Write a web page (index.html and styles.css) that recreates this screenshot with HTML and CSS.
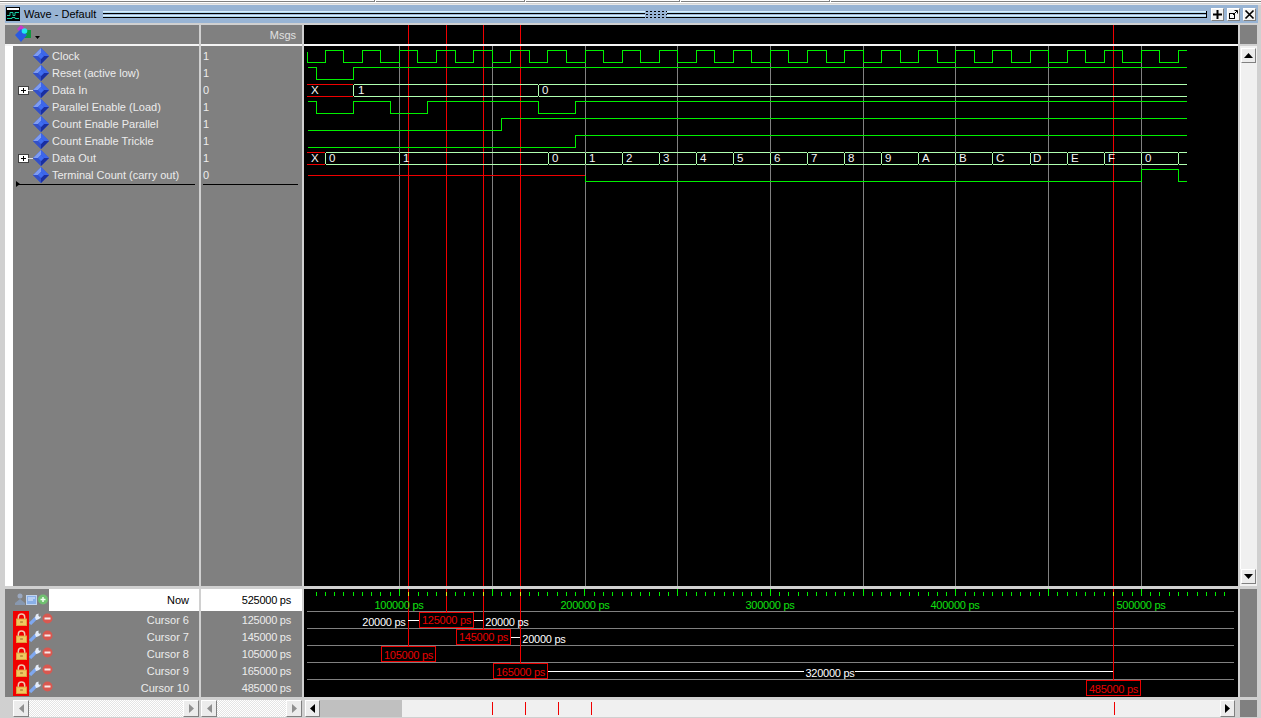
FILE: index.html
```html
<!DOCTYPE html>
<html lang="en">
<head>
<meta charset="utf-8">
<title>Wave - Default</title>
<link rel="stylesheet" href="styles.css">
</head>
<body>
<svg class="defs" width="0" height="0" aria-hidden="true">
  <defs>
    <symbol id="diamond" viewBox="0 0 16 16">
      <path d="M8 0L16 8L8 16L0 8Z" fill="#2a4fd8"/>
      <path d="M8 0L8 5L5 8L0 8Z" fill="#7f9cf0"/>
      <path d="M8 0L16 8L11 8L8 5Z" fill="#3c66ea"/>
      <path d="M0 8L5 8L8 11L8 16Z" fill="#3350c8"/>
      <path d="M16 8L11 8L8 11L8 16Z" fill="#1a2fa0"/>
      <path d="M8 5L11 8L8 11L5 8Z" fill="#3f6cf0"/>
    </symbol>
    <symbol id="lock" viewBox="0 0 12 14">
      <path d="M2.500 7V4.500a3.500 3.500 0 0 1 7 0V7" fill="none" stroke="#f0c8b0" stroke-width="1.600"/>
      <rect x="0.500" y="6.500" width="11" height="7" fill="#f0c860" stroke="#e0a840"/>
      <rect x="4.500" y="9" width="3" height="1.500" fill="#b08030"/>
    </symbol>
    <symbol id="wrench" viewBox="0 0 12 12">
      <path d="M1 11L7 5" stroke="#7fa8f0" stroke-width="3.200" fill="none"/>
      <path d="M6 4.500L7 1.500L9.500 0.500V3L11 4L12 2.500L11.500 5L9 6.500L7 7Z" fill="#e4ecfa"/>
    </symbol>
    <symbol id="minus" viewBox="0 0 11 11">
      <circle cx="5.500" cy="5.500" r="5" fill="#d85850"/>
      <rect x="2.500" y="4.500" width="6" height="2" fill="#f8e8e8"/>
    </symbol>
  </defs>
</svg>
<div class="window">
  <div class="strip"><i class="tab t1"></i><i class="tab t2"></i><i class="tab t3"></i><i class="tab t4"></i><i class="tab t5"></i></div>
  <header class="titlebar">
    <svg class="title-icon" width="14" height="14" viewBox="0 0 14 14">
      <rect width="14" height="14" fill="#000"/>
      <rect x="1" y="1" width="12" height="2" fill="#fff"/>
      <path d="M1 8.500h3v-3h3v3h2v-3h4M1 11.500h5v-1h3v1h4" stroke="#18c8a0" fill="none"/>
    </svg>
    <span class="title-text">Wave - Default</span>
    <div class="grip"><div class="dots"></div></div>
    <div class="title-buttons">
      <button class="tbtn"><svg width="11" height="11" viewBox="0 0 11 11"><path d="M5.500 1v9M1 5.500h9" stroke="#000" stroke-width="2"/></svg></button>
      <button class="tbtn"><svg width="11" height="11" viewBox="0 0 11 11"><rect x="1.500" y="4.500" width="5" height="5" fill="none" stroke="#000"/><path d="M5 6l4-4M6.500 1.500h3v3" stroke="#000" fill="none"/></svg></button>
      <button class="tbtn"><svg width="11" height="11" viewBox="0 0 11 11"><path d="M1.500 1.500l8 8M9.500 1.500l-8 8" stroke="#000" stroke-width="1.700"/></svg></button>
    </div>
  </header>

  <main class="panes">
    <!-- header row -->
    <div class="head head-names">
      <svg width="17" height="17" viewBox="0 0 17 17">
        <path d="M6 0L11 4L6 8L2 4Z" fill="#c838c8"/>
        <rect x="8" y="5" width="8" height="8" fill="#109840"/>
        <path d="M6 4L12 10L6 17L0 10Z" fill="#2a5ae0"/>
        <circle cx="9.500" cy="6" r="2.800" fill="#20e8f0"/>
      </svg>
      <svg class="caret" width="5" height="3" viewBox="0 0 5 3"><path d="M0 0h5L2.500 3Z" fill="#000"/></svg>
    </div>
    <div class="head head-values">Msgs</div>
    <div class="head head-wave">
      <svg class="head-svg" viewBox="304 25 934 19" width="934" height="19">
        <path class="cur" d="M408.500 25V44M446.500 25V44M483.500 25V44M520.500 25V44M1113.500 25V44"/>
      </svg>
    </div>
    <div class="vscroll-head"></div>

    <!-- signals -->
    <div class="names">
      <div class="sig"><svg class="dia"><use href="#diamond"/></svg><span>Clock</span></div>
      <div class="sig"><svg class="dia"><use href="#diamond"/></svg><span>Reset (active low)</span></div>
      <div class="sig"><i class="plus"></i><svg class="dia"><use href="#diamond"/></svg><span>Data In</span></div>
      <div class="sig"><svg class="dia"><use href="#diamond"/></svg><span>Parallel Enable (Load)</span></div>
      <div class="sig"><svg class="dia"><use href="#diamond"/></svg><span>Count Enable Parallel</span></div>
      <div class="sig"><svg class="dia"><use href="#diamond"/></svg><span>Count Enable Trickle</span></div>
      <div class="sig"><i class="plus"></i><svg class="dia"><use href="#diamond"/></svg><span>Data Out</span></div>
      <div class="sig"><svg class="dia"><use href="#diamond"/></svg><span>Terminal Count (carry out)</span></div>
      <div class="endline"></div>
    </div>
    <div class="values">
      <div class="val">1</div><div class="val">1</div><div class="val">0</div><div class="val">1</div>
      <div class="val">1</div><div class="val">1</div><div class="val">1</div><div class="val">0</div>
      <div class="endline"></div>
    </div>
    <svg class="wave" viewBox="304 46 934 540" width="934" height="540">
      <path class="grid" d="M399.500 46V586M492.500 46V586M585.500 46V586M677.500 46V586M770.500 46V586M863.500 46V586M955.500 46V586M1048.500 46V586M1141.500 46V586"/>
      <path class="cur" d="M408.500 46V586M446.500 46V586M483.500 46V586M520.500 46V586M1113.500 46V586"/>
      <path class="sigline" d="M307.500 52V62.500H325.500V50.500H343.500V62.500H362.500V50.500H380.500V62.500H399.500V50.500H417.500V62.500H436.500V50.500H455.500V62.500H473.500V50.500H492.500V62.500H510.500V50.500H529.500V62.500H547.500V50.500H566.500V62.500H585.500V50.500H603.500V62.500H622.500V50.500H640.500V62.500H659.500V50.500H677.500V62.500H696.500V50.500H714.500V62.500H733.500V50.500H751.500V62.500H770.500V50.500H788.500V62.500H807.500V50.500H826.500V62.500H844.500V50.500H863.500V62.500H881.500V50.500H900.500V62.500H918.500V50.500H937.500V62.500H955.500V50.500H974.500V62.500H992.500V50.500H1011.500V62.500H1030.500V50.500H1048.500V62.500H1067.500V50.500H1085.500V62.500H1104.500V50.500H1122.500V62.500H1141.500V50.500H1159.500V62.500H1178.500V50.500H1187"/>
      <path class="sigline" d="M308 67.500H316.500V79.500H353.500V67.500H1187"/>
      <path class="redline" d="M307 84.500H353M307 96.500H353"/>
      <path class="bus" d="M353.500 85.500L354.500 84.500H537.500L538.500 85.500V95.500L537.500 96.500H354.500L353.500 95.500ZM538.500 85.500L539.500 84.500H1187M538.500 95.500L539.500 96.500H1187"/>
      <path class="sigline" d="M308 101.500H316.500V113.500H353.500V101.500H390.500V113.500H427.500V101.500H538.500V113.500H575.500V101.500H1187"/>
      <path class="sigline" d="M308 130.500H501.500V118.500H1187"/>
      <path class="sigline" d="M308 147.500H575.500V135.500H1187"/>
      <path class="redline" d="M307 152.500H325M307 164.500H325"/>
      <path class="bus" d="M325.500 153.500L326.500 152.500H398.500L399.500 153.500V163.500L398.500 164.500H326.500L325.500 163.500ZM399.500 153.500L400.500 152.500H547.500L548.500 153.500V163.500L547.500 164.500H400.500L399.500 163.500ZM548.500 153.500L549.500 152.500H584.500L585.500 153.500V163.500L584.500 164.500H549.500L548.500 163.500ZM585.500 153.500L586.500 152.500H621.500L622.500 153.500V163.500L621.500 164.500H586.500L585.500 163.500ZM622.500 153.500L623.500 152.500H658.500L659.500 153.500V163.500L658.500 164.500H623.500L622.500 163.500ZM659.500 153.500L660.500 152.500H695.500L696.500 153.500V163.500L695.500 164.500H660.500L659.500 163.500ZM696.500 153.500L697.500 152.500H732.500L733.500 153.500V163.500L732.500 164.500H697.500L696.500 163.500ZM733.500 153.500L734.500 152.500H769.500L770.500 153.500V163.500L769.500 164.500H734.500L733.500 163.500ZM770.500 153.500L771.500 152.500H806.500L807.500 153.500V163.500L806.500 164.500H771.500L770.500 163.500ZM807.500 153.500L808.500 152.500H843.500L844.500 153.500V163.500L843.500 164.500H808.500L807.500 163.500ZM844.500 153.500L845.500 152.500H880.500L881.500 153.500V163.500L880.500 164.500H845.500L844.500 163.500ZM881.500 153.500L882.500 152.500H917.500L918.500 153.500V163.500L917.500 164.500H882.500L881.500 163.500ZM918.500 153.500L919.500 152.500H954.500L955.500 153.500V163.500L954.500 164.500H919.500L918.500 163.500ZM955.500 153.500L956.500 152.500H991.500L992.500 153.500V163.500L991.500 164.500H956.500L955.500 163.500ZM992.500 153.500L993.500 152.500H1029.500L1030.500 153.500V163.500L1029.500 164.500H993.500L992.500 163.500ZM1030.500 153.500L1031.500 152.500H1066.500L1067.500 153.500V163.500L1066.500 164.500H1031.500L1030.500 163.500ZM1067.500 153.500L1068.500 152.500H1103.500L1104.500 153.500V163.500L1103.500 164.500H1068.500L1067.500 163.500ZM1104.500 153.500L1105.500 152.500H1140.500L1141.500 153.500V163.500L1140.500 164.500H1105.500L1104.500 163.500ZM1141.500 153.500L1142.500 152.500H1177.500L1178.500 153.500V163.500L1177.500 164.500H1142.500L1141.500 163.500ZM1178.500 153.500L1179.500 152.500H1187M1178.500 163.500L1179.500 164.500H1187"/>
      <path class="redline" d="M308 175.500H585"/>
      <path class="sigline" d="M585.500 175.500V181.500H1141.500V169.500H1178.500V181.500H1187"/>
      <g class="wlabel">
        <text x="311" y="94">X</text><text x="358" y="94">1</text><text x="542" y="94">0</text>
        <text x="311" y="162">X</text><text x="329" y="162">0</text><text x="403" y="162">1</text>
        <text x="552" y="162">0</text><text x="589" y="162">1</text><text x="626" y="162">2</text>
        <text x="663" y="162">3</text><text x="700" y="162">4</text><text x="737" y="162">5</text>
        <text x="774" y="162">6</text><text x="811" y="162">7</text><text x="848" y="162">8</text>
        <text x="885" y="162">9</text><text x="922" y="162">A</text><text x="959" y="162">B</text>
        <text x="996" y="162">C</text><text x="1033" y="162">D</text><text x="1071" y="162">E</text>
        <text x="1108" y="162">F</text><text x="1145" y="162">0</text>
      </g>
    </svg>
    <div class="vscroll">
      <button class="sbtn up"><svg width="9" height="5" viewBox="0 0 9 5"><path d="M4.500 0L9 5H0Z"/></svg></button>
      <div class="vtrack"></div>
      <button class="sbtn down"><svg width="9" height="5" viewBox="0 0 9 5"><path d="M0 0H9L4.500 5Z"/></svg></button>
    </div>

    <!-- cursors -->
    <div class="cnames">
      <div class="nowrow">
        <div class="nowicons">
          <svg width="34" height="13" viewBox="0 0 34 13">
            <circle cx="6" cy="3" r="2.500" fill="#9aa8c0"/>
            <path d="M1 10l5-4 5 4v2H1Z" fill="#8898b0"/>
            <rect x="12.500" y="2.500" width="10" height="9" fill="#8ab0e8" stroke="#c0d4f0"/>
            <path d="M14 5h7M14 7h5" stroke="#e8f0ff"/>
            <circle cx="29" cy="6.500" r="5" fill="#70c070"/>
            <path d="M26.500 6.500h5M29 4v5" stroke="#f0fff0" stroke-width="1.500"/>
          </svg>
        </div>
        <span>Now</span>
      </div>
      <div class="crow"><div class="ctools"><svg class="ilock"><use href="#lock"/></svg></div><svg class="iw"><use href="#wrench"/></svg><svg class="im"><use href="#minus"/></svg><span>Cursor 6</span></div>
      <div class="crow"><div class="ctools"><svg class="ilock"><use href="#lock"/></svg></div><svg class="iw"><use href="#wrench"/></svg><svg class="im"><use href="#minus"/></svg><span>Cursor 7</span></div>
      <div class="crow"><div class="ctools"><svg class="ilock"><use href="#lock"/></svg></div><svg class="iw"><use href="#wrench"/></svg><svg class="im"><use href="#minus"/></svg><span>Cursor 8</span></div>
      <div class="crow"><div class="ctools"><svg class="ilock"><use href="#lock"/></svg></div><svg class="iw"><use href="#wrench"/></svg><svg class="im"><use href="#minus"/></svg><span>Cursor 9</span></div>
      <div class="crow"><div class="ctools"><svg class="ilock"><use href="#lock"/></svg></div><svg class="iw"><use href="#wrench"/></svg><svg class="im"><use href="#minus"/></svg><span>Cursor 10</span></div>
    </div>
    <div class="cvalues">
      <div class="nowval">525000 ps</div>
      <div class="cval">125000 ps</div>
      <div class="cval">145000 ps</div>
      <div class="cval">105000 ps</div>
      <div class="cval">165000 ps</div>
      <div class="cval">485000 ps</div>
    </div>
    <svg class="cwave" viewBox="304 589 934 108" width="934" height="108">
      <path class="tick" d="M316.500 592v4M325.500 592v4M334.500 592v4M343.500 592v4M353.500 592v4M362.500 592v4M371.500 592v4M380.500 592v4M390.500 592v4M399.500 589v7M418.500 592v4M427.500 592v4M436.500 592v4M455.500 592v4M464.500 592v4M473.500 592v4M492.500 589v7M501.500 592v4M510.500 592v4M529.500 592v4M538.500 592v4M547.500 592v4M557.500 592v4M566.500 592v4M575.500 592v4M584.500 589v7M594.500 592v4M603.500 592v4M612.500 592v4M622.500 592v4M631.500 592v4M640.500 592v4M649.500 592v4M659.500 592v4M668.500 592v4M677.500 589v7M686.500 592v4M696.500 592v4M705.500 592v4M714.500 592v4M724.500 592v4M733.500 592v4M742.500 592v4M751.500 592v4M761.500 592v4M770.500 589v7M779.500 592v4M788.500 592v4M798.500 592v4M807.500 592v4M816.500 592v4M826.500 592v4M835.500 592v4M844.500 592v4M853.500 592v4M863.500 589v7M872.500 592v4M881.500 592v4M890.500 592v4M900.500 592v4M909.500 592v4M918.500 592v4M928.500 592v4M937.500 592v4M946.500 592v4M955.500 589v7M965.500 592v4M974.500 592v4M983.500 592v4M992.500 592v4M1002.500 592v4M1011.500 592v4M1020.500 592v4M1030.500 592v4M1039.500 592v4M1048.500 589v7M1057.500 592v4M1067.500 592v4M1076.500 592v4M1085.500 592v4M1094.500 592v4M1104.500 592v4M1122.500 592v4M1132.500 592v4M1141.500 589v7M1150.500 592v4M1159.500 592v4M1169.500 592v4M1178.500 592v4M1187.500 592v4M1197.500 592v4M1206.500 592v4M1215.500 592v4M1224.500 592v4"/>
      <path class="rowline" d="M307 611.500H1234M307 628.500H1234M307 645.500H1234M307 662.500H1234M307 679.500H1234"/>
      <path class="cur" d="M408.500 589V646M446.500 589V612M483.500 589V629M520.500 589V663M1113.500 589V680"/>
      <path class="ytick" d="M408.500 592v4M446.500 592v4M483.500 592v4M520.500 592v4M1113.500 592v4"/>
      <path class="delta" d="M408 620.500H419M474 620.500H483M511 637.500H520M548 671.500H804M855 671.500H1113"/>
      <g class="boxes">
        <rect x="419.500" y="612.500" width="54" height="15"/>
        <rect x="456.500" y="629.500" width="54" height="15"/>
        <rect x="381.500" y="646.500" width="54" height="15"/>
        <rect x="493.500" y="663.500" width="54" height="15"/>
        <rect x="1086.500" y="680.500" width="54" height="15"/>
      </g>
      <g class="timelabel">
        <text x="399" y="609">100000 ps</text><text x="585" y="609">200000 ps</text>
        <text x="770" y="609">300000 ps</text><text x="955" y="609">400000 ps</text>
        <text x="1141" y="609">500000 ps</text>
      </g>
      <g class="redlabel">
        <text x="446.500" y="624">125000 ps</text><text x="483.500" y="641">145000 ps</text>
        <text x="408.500" y="659">105000 ps</text><text x="520.500" y="676">165000 ps</text>
        <text x="1113.500" y="693">485000 ps</text>
      </g>
      <g class="whitelabel">
        <text x="384" y="626">20000 ps</text><text x="507" y="626">20000 ps</text>
        <text x="544" y="643">20000 ps</text><text x="830" y="677">320000 ps</text>
      </g>
    </svg>
    <div class="vscroll-low"></div>

    <!-- scrollbars -->
    <div class="hs hs-names">
      <button class="sbtn dim"><svg width="5" height="9" viewBox="0 0 5 9"><path d="M5 0V9L0 4.500Z"/></svg></button>
      <div class="dither"></div>
      <button class="sbtn dim"><svg width="5" height="9" viewBox="0 0 5 9"><path d="M0 0V9L5 4.500Z"/></svg></button>
    </div>
    <div class="hs hs-values">
      <button class="sbtn dim"><svg width="5" height="9" viewBox="0 0 5 9"><path d="M5 0V9L0 4.500Z"/></svg></button>
      <div class="dither"></div>
      <button class="sbtn dim"><svg width="5" height="9" viewBox="0 0 5 9"><path d="M0 0V9L5 4.500Z"/></svg></button>
    </div>
    <div class="hs hs-wave">
      <button class="sbtn"><svg width="5" height="9" viewBox="0 0 5 9"><path d="M5 0V9L0 4.500Z"/></svg></button>
      <div class="hthumb"></div>
      <svg class="htrack" viewBox="402 700 818 17" width="818" height="17">
        <path d="M492.500 702V715M525.500 702V715M558.500 702V715M591.500 702V715M1114.500 702V715"/>
      </svg>
      <button class="sbtn"><svg width="5" height="9" viewBox="0 0 5 9"><path d="M0 0V9L5 4.500Z"/></svg></button>
    </div>
    <div class="vscroll-foot"></div>
  </main>
</div>
</body>
</html>
```

FILE: styles.css
```css
* { box-sizing: border-box; }
html, body { margin: 0; padding: 0; background: #d4d0c8; }
body { width: 1261px; height: 718px; overflow: hidden; font-family: "Liberation Sans", Arial, sans-serif; font-size: 11px; }
.defs { display: block; height: 0; }
.window { width: 1261px; height: 718px; display: flex; flex-direction: column; background: #d0d0d0; }
.strip { height: 5px; flex: none; display: flex; align-items: flex-start; background: linear-gradient(#fff 0 3px, #d4d4d4 3px 4px, #e8e8e8 4px); }
.tab { display: block; height: 2px; border-bottom: 1px solid #808080; border-right: 1px solid #808080; margin-right: 1px; flex: none; }
.t1 { width: 375px; }
.t2 { width: 149px; }
.t3 { width: 154px; }
.t4 { width: 149px; }
.t5 { flex: 1; border-right: 0; margin-right: 0; }

.titlebar { height: 18px; margin: 0 3px 0 5px; flex: none; background: #98b4d4; display: flex; align-items: center; padding: 0 2px 0 1px; }
.title-icon { flex: none; }
.title-text { margin-left: 4px; width: 79px; flex: none; color: #000; font-size: 11px; white-space: nowrap; }
.grip { flex: 1; height: 7px; position: relative; background: linear-gradient(#d8eefc 0 1px, #b0d8f0 1px 2px, #000 2px 3px, #98b4d4 3px 4px, #d8eefc 4px 5px, #b0d8f0 5px 6px, #000 6px 7px); border-right: 1px solid #000; }
.dots { position: absolute; left: 542px; top: -1px; width: 22px; height: 9px; background-color: #98b4d4; background-image: radial-gradient(#000 0.8px, transparent 1px); background-size: 4px 3px; }
.title-buttons { display: flex; gap: 3px; margin-left: 4px; }
.tbtn { width: 13px; height: 13px; padding: 0; margin: 0; border: 1px solid; border-color: #fff #808080 #808080 #fff; background: #f4f4f4; display: flex; align-items: center; justify-content: center; }

.panes { flex: none; margin: 2px 0 0 5px; width: 1252px; display: grid; grid-template-columns: 194px 101px 934px 17px; grid-template-rows: 21px 540px 111px 20px; column-gap: 2px; }
.panes > :nth-child(n+9) { margin-top: 3px; }
.panes > .head-names, .panes > .head-values, .panes > .head-wave { border-bottom: 2px solid #f4f4f4; }

.head-names { background: #808080; display: flex; align-items: flex-end; padding: 0 0 2px 10px; gap: 3px; }
.caret { margin-bottom: 3px; }
.head-values { background: #808080; color: #e0e0e0; text-align: right; padding: 4px 6px 0 0; }
.head-wave { background: #000; }
.head-svg { display: block; }
.vscroll-head { background: #808080; height: 19px; }

.names { background: #808080; border-left: 8px solid #fff; padding-top: 2px; position: relative; height: 540px; }
.values { background: #808080; padding-top: 2px; height: 540px; position: relative; }
.sig, .val { height: 17px; line-height: 16px; color: #ececec; white-space: nowrap; }
.sig { position: relative; padding-left: 39px; }
.dia { position: absolute; left: 20px; top: 0; width: 16px; height: 16px; }
.plus { position: absolute; left: 5px; top: 4px; width: 11px; height: 9px; border: 1px solid #404040; background: linear-gradient(#000, #000) center/5px 1px no-repeat, linear-gradient(#000, #000) center/1px 5px no-repeat, #fff; }
.plus::after { content: ""; position: absolute; left: 9px; top: 3px; width: 5px; height: 1px; background: #e0e0e0; }
.val { padding-left: 2px; }
.endline { height: 1px; background: #000; }
.names .endline { margin-left: 3px; margin-right: 4px; position: relative; }
.names .endline::before { content: ""; position: absolute; left: 0; top: -3px; border-left: 4px solid #000; border-top: 3px solid transparent; border-bottom: 3px solid transparent; }
.values .endline { margin-left: 2px; margin-right: 4px; }

.wave, .cwave { background: #000; display: block; }
.cur, .grid, .sigline, .redline, .bus, .tick, .ytick, .rowline, .delta { fill: none; shape-rendering: crispEdges; }
.cur { stroke: #f00000; }
.grid { stroke: #808080; }
.sigline { stroke: #00f000; }
.redline { stroke: #f00000; }
.bus { stroke: #b0ffb0; }
.tick { stroke: #00f000; }
.ytick { stroke: #e8e810; }
.rowline { stroke: #808080; }
.delta { stroke: #fff; }
.wlabel text { fill: #f4f4f4; font-size: 11.500px; }
.boxes rect { fill: #000; stroke: #e80000; shape-rendering: crispEdges; }
.timelabel text, .redlabel text, .whitelabel text { text-anchor: middle; font-size: 11px; letter-spacing: -0.250px; }
.timelabel text { fill: #10e010; }
.redlabel text { fill: #e80000; }
.whitelabel text { fill: #fff; }

.vscroll { display: flex; flex-direction: column; background: #f0f0f0; padding: 2px 0 2px; height: 540px; }
.sbtn { padding: 0; margin: 0; border: 1px solid; border-color: #fff #808080 #808080 #fff; background: #ececec; display: flex; align-items: center; justify-content: center; flex: none; }
.sbtn path { fill: #000; }
.sbtn.dim path { fill: #909090; }
.vscroll .sbtn { height: 15px; width: 15px; margin-left: 1px; }
.vtrack { flex: 1; background: #f0f0f0; border-left: 1px solid #fff; }

.cnames { background: #808080; display: flex; flex-direction: column; }
.nowrow { height: 22px; display: flex; background: #fff; color: #000; align-items: center; justify-content: flex-end; padding-right: 10px; position: relative; }
.nowicons { position: absolute; left: 0; top: 0; width: 44px; height: 22px; background: #808080; padding: 4px 0 0 9px; }
.nowicons svg { display: block; }
.crow { height: 17px; display: flex; align-items: center; color: #ececec; position: relative; }
.crow span { margin-left: auto; margin-right: 10px; white-space: pre; }
.ctools { width: 16px; height: 17px; margin-left: 8px; background: #f00000; display: flex; align-items: center; justify-content: center; }
.ilock { width: 11px; height: 13px; display: block; }
.iw { width: 12px; height: 12px; display: block; margin-bottom: 2px; }
.im { width: 11px; height: 11px; margin-left: 1px; margin-bottom: 2px; display: block; }
.cvalues { background: #808080; color: #ececec; text-align: right; letter-spacing: -0.250px; }
.nowval { height: 22px; line-height: 22px; background: #fff; color: #000; padding-right: 11px; }
.cval { height: 17px; line-height: 18px; padding-right: 11px; }
.vscroll-low { background: #808080; }

.hs { display: flex; height: 17px; }
.hs .sbtn { width: 16px; height: 17px; }
.hs-names { padding-left: 8px; }
.dither { flex: 1; background: repeating-conic-gradient(#fff 0 25%, #e4e4e4 0 50%) 0 0 / 2px 2px; }
.hs-wave { padding-left: 1px; }
.hs-wave .sbtn { width: 15px; }
.hthumb { width: 82px; background: #c0c0c0; }
.htrack { background: #f0f0f0; display: block; flex: none; }
.htrack path { stroke: #f00000; fill: none; shape-rendering: crispEdges; }
.vscroll-foot { background: #808080; }
```
